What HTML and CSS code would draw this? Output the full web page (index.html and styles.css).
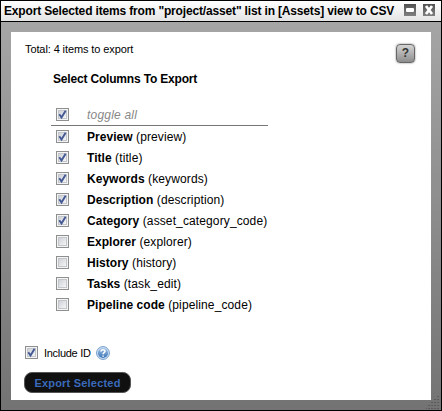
FILE: index.html
```html
<!DOCTYPE html>
<html lang="en">
<head>
<meta charset="utf-8">
<title>Export to CSV</title>
<link rel="stylesheet" href="styles.css">
</head>
<body>
<svg width="0" height="0" class="defs">
  <defs>
    <linearGradient id="boxfill" x1="0" y1="0" x2="1" y2="1"><stop offset="0" stop-color="#cbcfd5"/><stop offset="1" stop-color="#f8f8f8"/></linearGradient>
    <linearGradient id="winbtn" x1="0" y1="0" x2="0" y2="1"><stop offset="0" stop-color="#505050"/><stop offset="1" stop-color="#808080"/></linearGradient>
    <linearGradient id="blue" x1="0" y1="0" x2="0" y2="1"><stop offset="0" stop-color="#a4c4e6"/><stop offset="1" stop-color="#3973b5"/></linearGradient>
    <symbol id="box" viewBox="0 0 13 13">
      <rect x=".5" y=".5" width="12" height="12" fill="#f4f4f4" stroke="#8e8f8f"/>
      <rect x="2.5" y="2.5" width="8" height="8" fill="url(#boxfill)" stroke="#c3c7cc"/>
    </symbol>
    <symbol id="checked" viewBox="0 0 13 13">
      <use href="#box"/>
      <path d="M3.3 6.3L5.5 9.6L9.6 2.8" fill="none" stroke="#435894" stroke-width="1.9"/>
    </symbol>
  </defs>
</svg>
<div class="window">
  <header class="titlebar">
    <h1 class="title">Export Selected items from "project/asset" list in [Assets] view to CSV</h1>
    <svg class="winicon" width="12" height="12"><rect width="12" height="12" fill="url(#winbtn)"/><rect x="2" y="4" width="8" height="4" rx="1" fill="#fff"/></svg>
    <svg class="winicon" width="12" height="12"><rect width="12" height="12" fill="url(#winbtn)"/><path d="M3 2L9 10M9 2L3 10" stroke="#fff" stroke-width="2.8"/></svg>
  </header>
  <main class="frame">
    <section class="panel">
      <div class="top">
        <p class="total">Total: 4 items to export</p>
        <button class="help">?</button>
      </div>
      <h2 class="heading">Select Columns To Export</h2>
      <div class="columns">
        <label class="row toggle"><svg class="check"><use href="#checked"/></svg><i>toggle all</i></label>
        <label class="row"><svg class="check"><use href="#checked"/></svg><span><b>Preview</b> (preview)</span></label>
        <label class="row"><svg class="check"><use href="#checked"/></svg><span><b>Title</b> (title)</span></label>
        <label class="row"><svg class="check"><use href="#checked"/></svg><span><b>Keywords</b> (keywords)</span></label>
        <label class="row"><svg class="check"><use href="#checked"/></svg><span><b>Description</b> (description)</span></label>
        <label class="row"><svg class="check"><use href="#checked"/></svg><span><b>Category</b> (asset_category_code)</span></label>
        <label class="row"><svg class="check"><use href="#box"/></svg><span><b>Explorer</b> (explorer)</span></label>
        <label class="row"><svg class="check"><use href="#box"/></svg><span><b>History</b> (history)</span></label>
        <label class="row"><svg class="check"><use href="#box"/></svg><span><b>Tasks</b> (task_edit)</span></label>
        <label class="row"><svg class="check"><use href="#box"/></svg><span><b>Pipeline code</b> (pipeline_code)</span></label>
      </div>
      <label class="include"><svg class="check"><use href="#checked"/></svg><span class="include-text">Include ID</span>
        <svg width="14" height="14" viewBox="0 0 14 14"><circle cx="7" cy="7" r="6.4" fill="#d6e5f5" stroke="#6d9acb"/><circle cx="7" cy="7" r="5.1" fill="url(#blue)"/><path d="M5 5.4C5 3.1 9 3.1 9 5.3C9 6.7 7.1 6.6 7.1 8.3M7.1 9.4V10.8" fill="none" stroke="#fff" stroke-width="1.5"/></svg>
      </label>
      <button class="export">Export Selected</button>
    </section>
    <svg class="grip" width="14" height="14" fill="#5b5b5b"><path d="M11 0h2v1h-2zM8 3h2v1H8zM11 3h2v1h-2zM5 6h2v1H5zM8 6h2v1H8zM11 6h2v1h-2zM2 9h2v1H2zM5 9h2v1H5zM8 9h2v1H8zM11 9h2v1h-2zM0 12h1v1H0zM2 12h2v1H2zM5 12h2v1H5zM8 12h2v1H8zM11 12h2v1h-2z"/></svg>
  </main>
</div>
</body>
</html>
```
FILE: styles.css
```css
* { box-sizing: border-box; }
body { margin: 0; font-family: "Liberation Sans", Arial, sans-serif; color: #000; }
h1, h2, p { margin: 0; }
svg { display: block; flex: none; }
button { padding: 0; font-family: inherit; }
.defs { position: absolute; }
.window { width: 442px; height: 411px; border: 1px solid #000; display: flex; flex-direction: column; overflow: hidden; }
.titlebar { height: 21px; flex: none; display: flex; align-items: center; padding-left: 3px; border-bottom: 1px solid #000; background: linear-gradient(#fff, #e4e4e4); }
.title { width: 400px; flex: none; font-size: 12px; line-height: 18px; letter-spacing: -.16px; white-space: nowrap; }
.winicon { margin: 0 7px 2px 0; }
.winicon:last-child { margin-right: 0; }
.frame { flex: 1; position: relative; padding: 10px; background: linear-gradient(#a5a5a5, #737373); }
.panel { height: 368px; background: #fff; padding: 11px 16px 0 14px; }
.top { display: flex; justify-content: space-between; height: 28px; }
.total { font-size: 11px; line-height: 13px; letter-spacing: -.1px; }
.help { width: 19px; height: 19px; margin-top: 1px; border: 1px solid #666; border-radius: 4px; background: linear-gradient(#d4d4d4, #8d8d8d); box-shadow: 0 0 2px #777; font-size: 12px; font-weight: bold; line-height: 17px; color: #333; }
.heading { margin-left: 28px; font-size: 12px; line-height: 16px; letter-spacing: -.18px; }
.columns { width: 217px; margin: 17px 0 0 26px; font-size: 12px; }
.row { display: flex; align-items: center; height: 21px; padding-left: 5px; white-space: nowrap; letter-spacing: .12px; }
.row b { letter-spacing: .03px; }
.check { width: 13px; height: 13px; margin-right: 18px; }
.toggle { height: 22px; border-bottom: 1px solid #777; color: #888; letter-spacing: .2px; }
.include { display: flex; align-items: center; height: 15px; margin-top: 30px; font-size: 11px; letter-spacing: -.3px; }
.include .check { margin-right: 6px; }
.include-text { width: 52px; }
.export { display: block; width: 107px; height: 21px; margin-top: 12px; margin-left: -1px; padding-top: 1px; border: 1px solid #555; border-radius: 8px; background: #101010; color: #3b6abb; font-size: 11px; font-weight: bold; letter-spacing: .2px; line-height: 18px; }
.grip { position: absolute; right: 1px; bottom: 0; }
```
